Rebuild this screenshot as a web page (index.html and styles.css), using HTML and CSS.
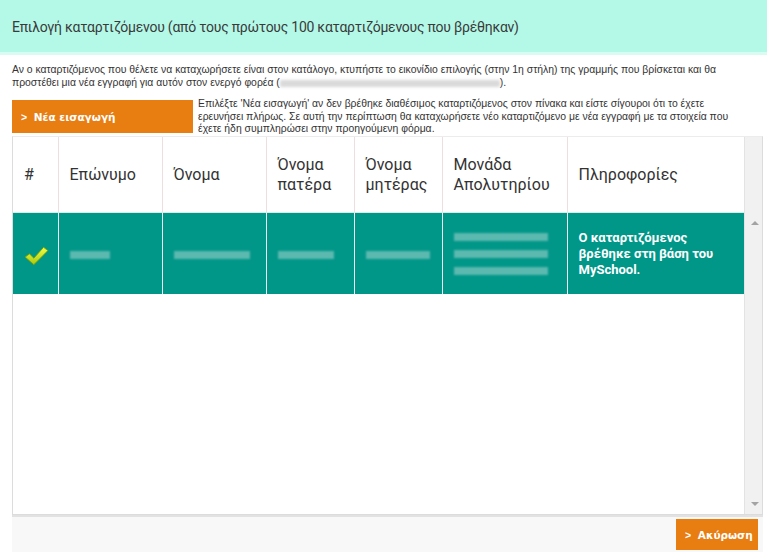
FILE: index.html
```html
<!DOCTYPE html>
<html lang="el">
<head>
    <meta charset="UTF-8">
    <title>Επιλογή καταρτιζόμενου</title>
    <link rel="stylesheet" href="styles.css">
</head>
<body>
    <div class="dialog_title">Επιλογή καταρτιζόμενου (από τους πρώτους 100 καταρτιζόμενους που βρέθηκαν)</div>

    <div class="dialog_body">
        <p class="intro">Αν ο καταρτιζόμενος που θέλετε να καταχωρήσετε είναι στον κατάλογο, κτυπήστε το εικονίδιο επιλογής (στην 1η στήλη) της γραμμής που βρίσκεται και θα προστέθει μια νέα εγγραφή για αυτόν στον ενεργό φορέα (<span class="blur blur-wide"></span>).</p>

        <div class="new_row">
            <button class="btn btn-new"><span class="chev">&gt;</span> Νέα εισαγωγή</button>
            <p class="new_hint">Επιλέξτε 'Νέα εισαγωγή' αν δεν βρέθηκε διαθέσιμος καταρτιζόμενος στον πίνακα και είστε σίγουροι ότι το έχετε ερευνήσει πλήρως. Σε αυτή την περίπτωση θα καταχωρήσετε νέο καταρτιζόμενο με νέα εγγραφή με τα στοιχεία που έχετε ήδη συμπληρώσει στην προηγούμενη φόρμα.</p>
        </div>

        <div class="grid_box">
            <div class="grid_main">
                <table class="grid">
                    <colgroup>
                        <col style="width:45px">
                        <col style="width:104px">
                        <col style="width:104px">
                        <col style="width:88px">
                        <col style="width:88px">
                        <col style="width:125px">
                        <col style="width:177px">
                    </colgroup>
                    <thead>
                        <tr>
                            <th>#</th>
                            <th>Επώνυμο</th>
                            <th>Όνομα</th>
                            <th>Όνομα πατέρα</th>
                            <th>Όνομα μητέρας</th>
                            <th>Μονάδα Απολυτηρίου</th>
                            <th>Πληροφορίες</th>
                        </tr>
                    </thead>
                    <tbody>
                        <tr class="selected">
                            <td class="pick">
                                <svg width="26" height="24" viewBox="0 0 24 22">
                                    <defs>
                                        <linearGradient id="chk" x1="0" y1="0" x2="0" y2="1">
                                            <stop offset="0" stop-color="#f2ff45"/>
                                            <stop offset="1" stop-color="#a6c80c"/>
                                        </linearGradient>
                                    </defs>
                                    <path d="M2 12 L6 9 L10 13 L19 3 L23 6 L10 19 Z" fill="url(#chk)" stroke="#7d9a06" stroke-width="0.8" stroke-linejoin="round"/>
                                </svg>
                            </td>
                            <td><span class="blur" style="width:40px"></span></td>
                            <td><span class="blur" style="width:76px"></span></td>
                            <td><span class="blur" style="width:56px"></span></td>
                            <td><span class="blur" style="width:64px"></span></td>
                            <td class="multi">
                                <span class="blur" style="width:94px"></span>
                                <span class="blur" style="width:94px"></span>
                                <span class="blur" style="width:94px"></span>
                            </td>
                            <td class="info">Ο καταρτιζόμενος βρέθηκε στη βάση του MySchool.</td>
                        </tr>
                    </tbody>
                </table>
            </div>
            <div class="scrollbar">
                <span class="arrow up"></span>
                <span class="arrow down"></span>
            </div>
        </div>

        <div class="dialog_footer">
            <button class="btn btn-cancel"><span class="chev">&gt;</span> Ακύρωση</button>
        </div>
    </div>
</body>
</html>
```

FILE: styles.css
```css
body {
    margin: 0;
    font-family: Roboto, "Liberation Sans", sans-serif;
    color: #333;
    background: #fff;
}

.dialog_title {
    height: 52px;
    line-height: 54px;
    padding-left: 12px;
    background-color: #b4f9e7;
    font-size: 14px;
    letter-spacing: -0.25px;
    color: #3a3a3a;
    border-bottom: 3px solid #d8fbf2;
}

.dialog_body {
    padding: 0 4px 0 12px;
}

.intro {
    margin: 8px 0 0;
    font-family: "Liberation Sans", sans-serif;
    font-size: 10.4px;
    line-height: 13px;
    color: #333;
}

.blur {
    display: inline-block;
    height: 7px;
    vertical-align: middle;
    background: #c9c9c9;
    filter: blur(1.5px);
    opacity: 0.7;
}

.blur-wide {
    width: 220px;
}

.new_row {
    display: flex;
    margin-top: 11px;
    height: 36px;
}

.btn {
    flex-shrink: 0;
    white-space: nowrap;
    border: none;
    background-color: #e87d12;
    color: #fff;
    font-family: "DejaVu Sans", sans-serif;
    font-weight: bold;
    font-size: 10.5px;
    text-align: left;
    cursor: pointer;
}

.chev {
    font-family: "Liberation Sans", sans-serif;
    margin-right: 3px;
}

.btn-new {
    width: 181px;
    height: 33px;
    padding-left: 9px;
}

.new_hint {
    width: 550px;
    margin: -2px 0 0 5px;
    font-family: "Liberation Sans", sans-serif;
    font-size: 10.4px;
    line-height: 12.5px;
    color: #333;
}

.grid_box {
    display: flex;
    height: 377px;
    border: 1px solid #dcdcdc;
    border-top-color: #ececec;
}

.grid_main {
    width: 731px;
    background: #fff;
}

.grid {
    border-collapse: collapse;
    table-layout: fixed;
    width: 731px;
}

.grid th {
    height: 75px;
    padding: 0 11px;
    text-align: left;
    font-weight: normal;
    font-size: 16px;
    line-height: 20px;
    color: #333;
    border-right: 1px solid #efdede;
    border-bottom: 1px solid #d8ecea;
}

.grid th:last-child {
    border-right: none;
}

.grid td {
    height: 81px;
    padding: 0 11px;
    border-right: 1px solid #e8f5f3;
    vertical-align: middle;
}

.grid td:last-child {
    border-right: none;
}

.selected {
    background-color: #009688;
}

.pick {
    padding: 0 0 0 10px !important;
}

.pick svg {
    display: block;
    margin-top: 4px;
}

.selected .blur {
    height: 8px;
    background: #a8d6d0;
    filter: blur(1.2px);
    opacity: 0.55;
}

.multi .blur {
    display: block;
    margin: 9px 0;
}

.info {
    color: #fff;
    font-weight: bold;
    font-size: 13px;
    line-height: 16px;
}

.scrollbar {
    position: relative;
    flex: 1;
    background: #f1f1f1;
    border-left: 1px solid #e3e3e3;
}

.arrow {
    position: absolute;
    left: 6px;
    width: 0;
    height: 0;
    border-left: 4px solid transparent;
    border-right: 4px solid transparent;
}

.arrow.up {
    top: 84px;
    border-bottom: 4px solid #a3a3a3;
}

.arrow.down {
    bottom: 8px;
    border-top: 4px solid #a3a3a3;
}

.dialog_footer {
    display: flex;
    justify-content: flex-end;
    height: 38px;
    padding: 2px 5px 0 0;
    box-sizing: border-box;
    background: #f8f8f8;
    border-top: 2px solid #e2e2e2;
}

.btn-cancel {
    width: 82px;
    height: 31px;
    padding-left: 9px;
}
```
